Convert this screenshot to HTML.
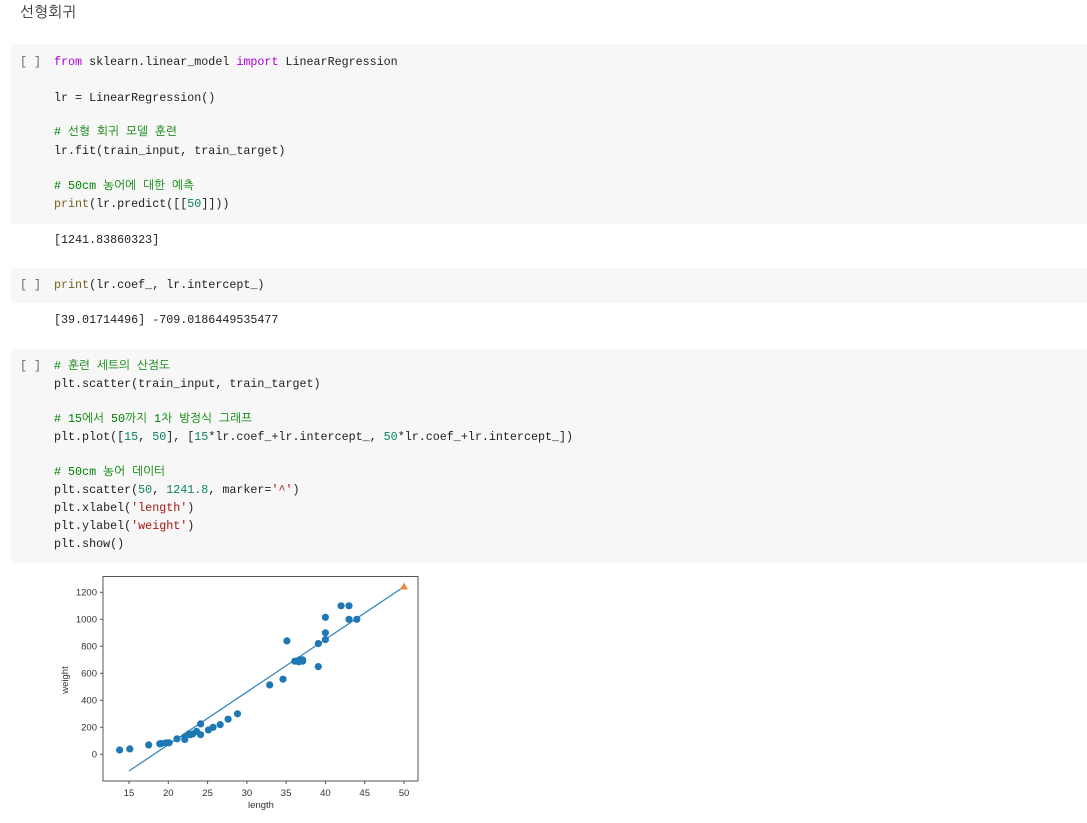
<!DOCTYPE html>
<html><head><meta charset="utf-8"><style>
body{margin:0;width:1087px;height:823px;background:#fff;position:relative;overflow:hidden;font-family:"Liberation Mono","NanumGothic","Noto Sans CJK KR",monospace;font-size:11.7px;color:#212121}
.h{position:absolute;left:20px;top:3px;font-family:"Liberation Sans","NanumGothic","Noto Sans CJK KR",sans-serif;font-size:15px;color:#333}
.cell{position:absolute;left:11px;right:0;background:#f7f7f7}
.l{position:absolute;left:54px;white-space:pre;line-height:18px;height:18px}
.b{position:absolute;left:20px;white-space:pre;line-height:18px;color:#666}
.k{color:#af00db}.c{color:#008000}.n{color:#098658}.s{color:#a31515}.f{color:#795e26}
svg text{font-family:"Liberation Sans",sans-serif;font-size:9.5px;fill:#333}
</style></head><body>
<div class="h">선형회귀</div>
<div class="cell" style="top:44px;height:180px"></div>
<div class="cell" style="top:268px;height:35px"></div>
<div class="cell" style="top:349px;height:214px"></div>
<div class="b" style="top:53px">[ ]</div>
<div class="b" style="top:276px">[ ]</div>
<div class="b" style="top:357px">[ ]</div>
<div class="l" style="top:53px"><span class="k">from</span> sklearn.linear_model <span class="k">import</span> LinearRegression</div>
<div class="l" style="top:89px">lr = LinearRegression()</div>
<div class="l c" style="top:123px"># 선형 회귀 모델 훈련</div>
<div class="l" style="top:142px">lr.fit(train_input, train_target)</div>
<div class="l c" style="top:177px"># 50cm 농어에 대한 예측</div>
<div class="l" style="top:195px"><span class="f">print</span>(lr.predict([[<span class="n">50</span>]]))</div>
<div class="l" style="top:231px">[1241.83860323]</div>
<div class="l" style="top:276px"><span class="f">print</span>(lr.coef_, lr.intercept_)</div>
<div class="l" style="top:311px">[39.01714496] -709.0186449535477</div>
<div class="l c" style="top:357px"># 훈련 세트의 산점도</div>
<div class="l" style="top:375px">plt.scatter(train_input, train_target)</div>
<div class="l c" style="top:410px"># 15에서 50까지 1차 방정식 그래프</div>
<div class="l" style="top:428px">plt.plot([<span class="n">15</span>, <span class="n">50</span>], [<span class="n">15</span>*lr.coef_+lr.intercept_, <span class="n">50</span>*lr.coef_+lr.intercept_])</div>
<div class="l c" style="top:463px"># 50cm 농어 데이터</div>
<div class="l" style="top:481px">plt.scatter(<span class="n">50</span>, <span class="n">1241.8</span>, marker=<span class="s">'^'</span>)</div>
<div class="l" style="top:499px">plt.xlabel(<span class="s">'length'</span>)</div>
<div class="l" style="top:517px">plt.ylabel(<span class="s">'weight'</span>)</div>
<div class="l" style="top:535px">plt.show()</div>
<svg width="1087" height="823" style="position:absolute;left:0;top:0">
<rect x="103" y="576.5" width="315" height="204.5" fill="none" stroke="#555" stroke-width="1"/>
<line x1="129" y1="771" x2="404" y2="586.7" stroke="#3a88c0" stroke-width="1.3"/>
<polygon points="404,582.5 400,589.5 408,589.5" fill="#f0883a"/>
<g stroke="#555"><line x1="129" y1="781" x2="129" y2="784"/><line x1="168.3" y1="781" x2="168.3" y2="784"/><line x1="207.6" y1="781" x2="207.6" y2="784"/><line x1="246.9" y1="781" x2="246.9" y2="784"/><line x1="286.1" y1="781" x2="286.1" y2="784"/><line x1="325.4" y1="781" x2="325.4" y2="784"/><line x1="364.7" y1="781" x2="364.7" y2="784"/><line x1="404" y1="781" x2="404" y2="784"/>
<line x1="100" y1="754.3" x2="103" y2="754.3"/><line x1="100" y1="727.3" x2="103" y2="727.3"/><line x1="100" y1="700.3" x2="103" y2="700.3"/><line x1="100" y1="673.3" x2="103" y2="673.3"/><line x1="100" y1="646.3" x2="103" y2="646.3"/><line x1="100" y1="619.3" x2="103" y2="619.3"/><line x1="100" y1="592.3" x2="103" y2="592.3"/></g>
<g text-anchor="middle"><text x="129" y="796">15</text><text x="168.3" y="796">20</text><text x="207.6" y="796">25</text><text x="246.9" y="796">30</text><text x="286.1" y="796">35</text><text x="325.4" y="796">40</text><text x="364.7" y="796">45</text><text x="404" y="796">50</text><text x="261" y="808">length</text></g>
<g text-anchor="end"><text x="97" y="757.5">0</text><text x="97" y="730.5">200</text><text x="97" y="703.5">400</text><text x="97" y="676.5">600</text><text x="97" y="649.5">800</text><text x="97" y="622.5">1000</text><text x="97" y="595.5">1200</text></g>
<text x="68" y="680" text-anchor="middle" transform="rotate(-90 68 680)">weight</text>
<g fill="#1f77b4">
<circle cx="119.6" cy="750" r="3.6"/><circle cx="129.8" cy="748.9" r="3.6"/><circle cx="148.7" cy="744.9" r="3.6"/><circle cx="159.7" cy="743.8" r="3.6"/><circle cx="161.3" cy="743.5" r="3.6"/><circle cx="166" cy="742.8" r="3.6"/><circle cx="169.1" cy="742.8" r="3.6"/><circle cx="177" cy="738.8" r="3.6"/><circle cx="184.8" cy="739.5" r="3.6"/><circle cx="184.8" cy="736.8" r="3.6"/><circle cx="188.8" cy="734" r="3.6"/><circle cx="190.3" cy="734.7" r="3.6"/><circle cx="192.7" cy="734" r="3.6"/><circle cx="196.6" cy="731.4" r="3.6"/><circle cx="200.6" cy="723.9" r="3.6"/><circle cx="200.6" cy="734.7" r="3.6"/><circle cx="208.4" cy="730" r="3.6"/><circle cx="213.1" cy="727.3" r="3.6"/><circle cx="220.2" cy="724.6" r="3.6"/><circle cx="228.1" cy="719.2" r="3.6"/><circle cx="237.5" cy="713.8" r="3.6"/><circle cx="269.7" cy="684.9" r="3.6"/><circle cx="283" cy="679.2" r="3.6"/><circle cx="286.9" cy="640.9" r="3.6"/><circle cx="294.8" cy="661.2" r="3.6"/><circle cx="298.7" cy="661.8" r="3.6"/><circle cx="299.5" cy="659.8" r="3.6"/><circle cx="302.6" cy="661.2" r="3.6"/><circle cx="302.6" cy="659.8" r="3.6"/><circle cx="318.3" cy="643.6" r="3.6"/><circle cx="318.3" cy="666.6" r="3.6"/><circle cx="325.4" cy="617.3" r="3.6"/><circle cx="325.4" cy="632.8" r="3.6"/><circle cx="325.4" cy="639.6" r="3.6"/><circle cx="341.1" cy="605.8" r="3.6"/><circle cx="349" cy="605.8" r="3.6"/><circle cx="349" cy="619.3" r="3.6"/><circle cx="356.8" cy="619.3" r="3.6"/>
</g>
</svg>
</body></html>
